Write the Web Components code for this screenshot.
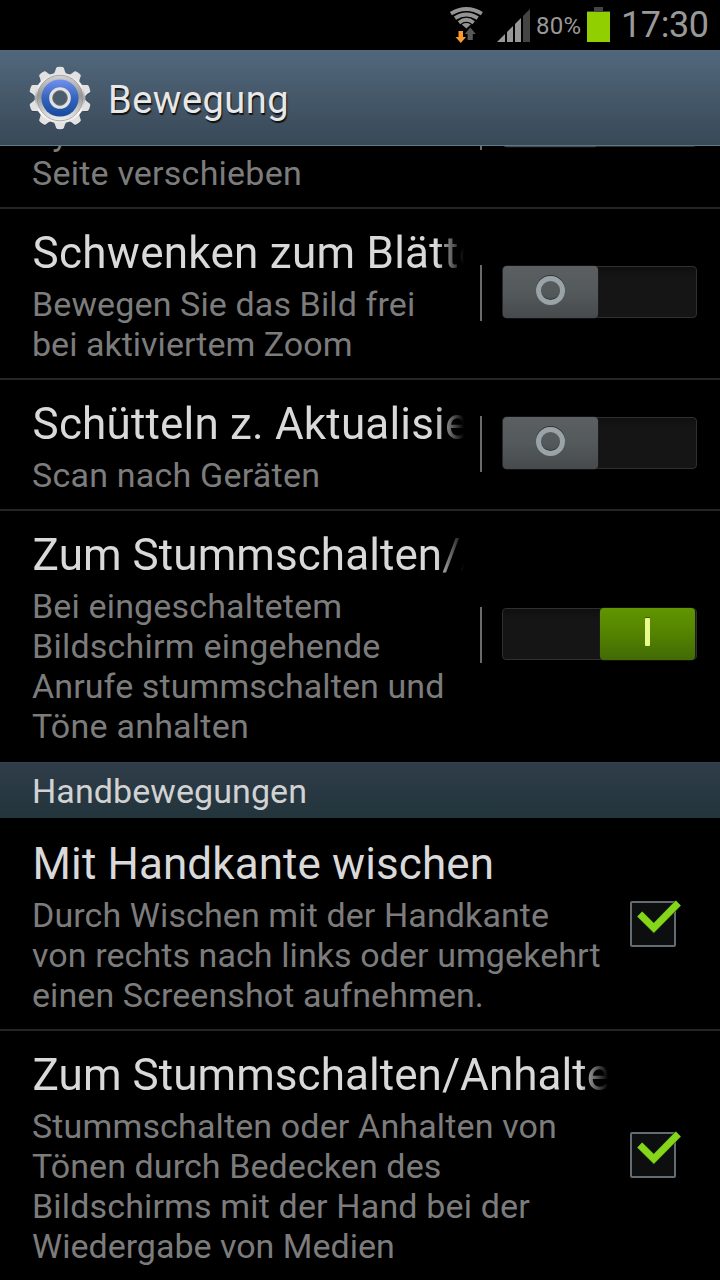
<!DOCTYPE html>
<html lang="de">
<head>
<meta charset="utf-8">
<title>Bewegung</title>
<style>
html,body{margin:0;background:#000}
body{width:720px;height:1280px;overflow:hidden;font-family:Roboto,"Noto Sans",sans-serif}
</style>
</head>
<body>
<settings-screen></settings-screen>
<script>
const define = (name, html) => {
  const t = document.createElement('template');
  t.innerHTML = html;
  customElements.define(name, class extends HTMLElement {
    constructor() {
      super();
      this.attachShadow({mode: 'open'}).append(t.content.cloneNode(true));
    }
  });
};

define('wifi-icon', `<style>:host{display:block;width:36px;height:44px}svg{display:block}</style>
<svg width="36" height="44" viewBox="449 0 36 44" fill="none">
<g stroke="#939393" stroke-width="3.9">
<path d="M450.9 13.6Q466.3 4.4 481.9 13.6"/><path d="M455 18.2Q466.3 10.6 477.7 18.2"/><path d="M459 22.7Q466.3 17 473.7 22.7"/></g>
<path d="M461.8 24.5Q466.3 21.6 470.8 24.5L466.3 28.6Z" fill="#939393"/>
<path d="M470.3 27.5L475.8 34H472.8V40H467.6V34H464.8Z" fill="#585858"/>
<path d="M458.5 31H463V37H466L460.8 43L455.5 37H458.5Z" fill="#fb9a2c"/>
</svg>`);

define('signal-icon', `<style>:host{display:block;width:33px;height:33px}svg{display:block}</style>
<svg width="33" height="33" viewBox="0 0 33 33">
<g fill="#979797"><path d="M0 33L8 25V33Z"/><path d="M10 23L16 17V33H10Z"/><path d="M18 15L24 9V33H18Z"/></g>
<path d="M26 7L33 0V33H26Z" fill="#444"/></svg>`);

define('battery-icon', `<style>:host{display:block;width:23px;height:35px}svg{display:block}</style>
<svg width="23" height="35" viewBox="0 0 23 35"><path d="M7 0H16V4H23V6H0V4H7Z" fill="#444"/><path d="M0 5H23V35H0Z" fill="#92cf00"/></svg>`);

define('status-bar', `<style>
:host{display:flex;height:50px;box-sizing:border-box;background:#000;color:#999;justify-content:flex-end;padding-right:12px}
signal-icon{margin:9px 6px 0 12px}
battery-icon{margin:7px 11px 0 6px}
.pct{width:45px;margin-left:0;font-size:24px;line-height:28px;padding-top:12px;white-space:nowrap;letter-spacing:.2px}
.time{width:87px;font-size:36px;line-height:42px;padding-top:4px;white-space:nowrap;letter-spacing:-.4px}
</style><wifi-icon></wifi-icon><signal-icon></signal-icon><span class="pct">80%</span><battery-icon></battery-icon><span class="time">17:30</span>`);

const teeth = Array.from({length: 10}, (_, i) =>
  `<path transform="rotate(${i * 36})" d="M-6 -24.5Q-4.6 -27 -4 -29.8Q-3.6 -30.8 -2.6 -31Q0 -31.4 2.6 -31Q3.6 -30.8 4 -29.8Q4.6 -27 6 -24.5Z"/>`).join('');
define('gear-icon', `<style>:host{display:block;width:64px;height:64px}svg{display:block}</style>
<svg width="64" height="64" viewBox="-32 -32 64 64">
<defs>
<linearGradient id="m" gradientUnits="userSpaceOnUse" x1="0" y1="-31" x2="0" y2="31"><stop offset="0" stop-color="#dedede"/><stop offset=".3" stop-color="#f2f2f2"/><stop offset=".5" stop-color="#a8a8a8"/><stop offset=".72" stop-color="#fff"/><stop offset="1" stop-color="#dcdcdc"/></linearGradient>
<linearGradient id="b" x1="0" y1="0" x2="0" y2="1"><stop offset="0" stop-color="#7291ee"/><stop offset=".5" stop-color="#3564bd"/><stop offset="1" stop-color="#164a9c"/></linearGradient>
<linearGradient id="r" x1="0" y1="0" x2="0" y2="1"><stop offset="0" stop-color="#d2d2d2"/><stop offset=".45" stop-color="#979797"/><stop offset="1" stop-color="#f0f0f0"/></linearGradient>
</defs>
<g fill="#223" opacity=".35" transform="translate(0 1)">${teeth}</g>
<circle r="25.5" fill="url(#m)"/><g fill="#e2e2e2">${teeth}</g><circle r="25" fill="url(#m)"/>
<circle r="22.8" fill="url(#r)" stroke="#909090" stroke-width=".7"/>
<circle r="18.6" fill="url(#b)"/>
<circle r="9.1" fill="#4b5d6c" stroke="#e2e2e2" stroke-width="3.4"/><circle r="7.4" fill="none" stroke="#777" stroke-width=".8"/>
</svg>`);

define('action-bar', `<style>
:host{display:flex;height:96px;box-sizing:border-box;padding-left:28px;background:linear-gradient(#51687c,#384857);border-bottom:1px solid #607987;color:#e8e8e8}
gear-icon{margin-top:16px}
.t{margin-left:16px;padding-top:28px;font-size:38px;line-height:45px;text-shadow:1px 2px 1px #111;white-space:nowrap;letter-spacing:.5px}
</style><gear-icon></gear-icon><span class="t"><slot></slot></span>`);

define('toggle-switch', `<style>
:host{display:flex;width:195px;height:52px;box-sizing:border-box;border:1px solid #303030;border-radius:4px;background:linear-gradient(#101010,#151515 20%)}
.k{display:flex;justify-content:center;width:95px;height:52px;margin:-1px 0 0 0;border-radius:4px;background:linear-gradient(#5b5f61,#54595b 50%,#464a4c);box-shadow:0 0 0 .5px #222}
.o{box-sizing:border-box;width:29px;height:29px;margin-top:10px;border:5px solid #9aa3a8;border-radius:50%;box-shadow:0 -1px 0 #333,inset 0 -1px 0 #333}
.i{display:none;width:5px;height:28px;margin-top:10px;background:#e9fb8f;border-radius:1px;box-shadow:0 -1px 0 #3c5e05}
:host([on]) .k{margin-left:97px;background:linear-gradient(#619500,#558500 45%,#426a05)}
:host([on]) .o{display:none}:host([on]) .i{display:block}
</style><div class="k"><div class="o"></div><div class="i"></div></div>`);

define('check-box', `<style>:host{display:block;width:52px;height:46px}svg{display:block;overflow:visible}</style>
<svg width="52" height="46" viewBox="0 0 52 46"><rect x="1" y="1" width="44" height="44" rx="1" fill="#0c0e10" stroke="#646c72" stroke-width="2"/>
<path d="M9.7 13L23.8 27L48.3 2" fill="none" stroke="#263c08" stroke-width="8"/>
<path d="M9.7 13L23.8 27L48.3 2" fill="none" stroke="#84d61a" stroke-width="6.8"/></svg>`);

define('text-line', `<style>:host{display:block;white-space:nowrap}</style><slot></slot>`);

define('setting-row', `<style>
:host{display:flex;flex:none;box-sizing:border-box;align-items:center;padding-left:32px;border-bottom:2px solid #252525}
:host([last]){border-color:transparent}
.txt{display:flex;flex-direction:column;flex:none;width:432px;padding:18px 0 14px;white-space:nowrap}
:host([wide]) .txt{width:576px}
.title{height:52px;font-size:44px;line-height:52px;color:#d9d9d9;overflow:hidden;margin-bottom:5px;text-indent:.6px}
:host([fade]) .title{-webkit-mask-image:linear-gradient(90deg,#000 calc(100% - 28px),transparent);mask-image:linear-gradient(90deg,#000 calc(100% - 28px),transparent)}
.sum{font-size:34px;line-height:40px;color:#7c7c7c}
.w{display:flex;align-items:center;flex:none;margin-left:16px;position:relative;height:56px;top:-.5px}
.w::before{content:"";width:2px;height:56px;background:#6a6a6a;margin-right:20px}
::slotted(toggle-switch){margin-bottom:2px}
:host([wide]) .w{margin-left:22px;height:46px}
:host([wide]) .w::before{display:none}
</style><div class="txt"><div class="title"><slot name="title"></slot></div><div class="sum"><slot name="sum"></slot></div></div><div class="w"><slot></slot></div>`);

define('section-header', `<style>
:host{display:block;flex:none;box-sizing:border-box;height:56px;margin-bottom:2px;padding:8px 0 0 32px;border-top:1px solid #34434f;background:linear-gradient(#2f3d49,#22343c);color:#d2d2d2;font-size:34px;line-height:40px;letter-spacing:.08px}
</style><slot></slot>`);

/* A row's lines, each with its own tracking: [text, letter-spacing in px]. */
const lines = (...items) => items.map(([text, ls]) =>
  `<text-line slot="sum" style="letter-spacing:${ls}px">${text}</text-line>`).join('');
const title = (text, ls) => `<text-line slot="title" style="letter-spacing:${ls}px">${text}</text-line>`;

define('settings-screen', `<style>
:host{display:flex;flex-direction:column;width:720px;height:1280px;overflow:hidden;background:#000}
.list{display:flex;flex-direction:column;flex:1;min-height:0;overflow:hidden}
.scrolled{margin-top:-108px}
</style>
<status-bar></status-bar>
<action-bar>Bewegung</action-bar>
<div class="list">
<setting-row class="scrolled">${lines(['Symbol auf andere', 0], ['Seite verschieben', .22])}<toggle-switch></toggle-switch></setting-row>
<setting-row fade>${title('Schwenken zum Blättern', .27)}${lines(['Bewegen Sie das Bild frei', .12], ['bei aktiviertem Zoom', .02])}<toggle-switch></toggle-switch></setting-row>
<setting-row fade>${title('Schütteln z. Aktualisieren', .18)}${lines(['Scan nach Geräten', .22])}<toggle-switch></toggle-switch></setting-row>
<setting-row fade last>${title('Zum Stummschalten/Anhalten', .08)}${lines(['Bei eingeschaltetem', .16], ['Bildschirm eingehende', .22], ['Anrufe stummschalten und', .1], ['Töne anhalten', .23])}<toggle-switch on></toggle-switch></setting-row>
<section-header>Handbewegungen</section-header>
<setting-row wide>${title('Mit Handkante wischen', .1)}${lines(['Durch Wischen mit der Handkante', .1], ['von rechts nach links oder umgekehrt', .08], ['einen Screenshot aufnehmen.', .08])}<check-box></check-box></setting-row>
<setting-row wide fade last>${title('Zum Stummschalten/Anhalten', .06)}${lines(['Stummschalten oder Anhalten von', .14], ['Tönen durch Bedecken des', .09], ['Bildschirms mit der Hand bei der', .15], ['Wiedergabe von Medien', 0])}<check-box></check-box></setting-row>
</div>`);
</script>
</body>
</html>
